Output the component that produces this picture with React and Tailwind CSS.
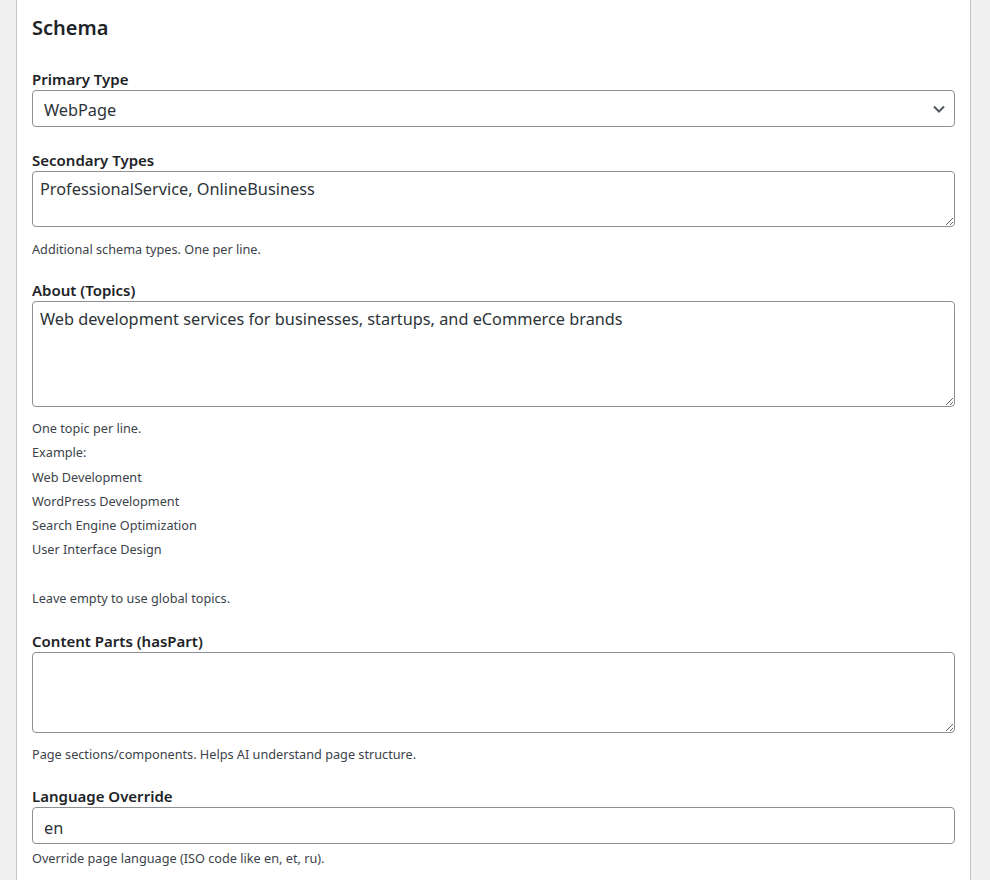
import React from 'react';

const font = { fontFamily: '"Noto Sans", "Segoe UI", sans-serif' };

const Label = ({ children }) => (
  <label className="block text-[15px] font-semibold leading-[22px] text-[#1d2327]">{children}</label>
);

const Help = ({ children, className = 'mt-[12px]' }) => (
  <p className={`${className} text-[12.7px] leading-[20px] text-[#3c434a]`}>{children}</p>
);

const Area = ({ h, value }) => (
  <textarea
    defaultValue={value}
    className={`block w-full ${h} rounded-[4px] border border-[#8c8f94] bg-white px-[7px] py-[5px] text-[16.3px] leading-[24px] text-[#2c3338] outline-none`}
    style={font}
  />
);

export default function App() {
  return (
    <div className="flex min-h-[880px] bg-[#f0f0f1] pl-[16px] pr-[19px]" style={font}>
      <div className="flex-1 border-x border-[#c3c4c7] bg-white px-[15px] pt-[13px] pb-[12px]">
        <h2 className="text-[20px] font-semibold leading-[30px] text-[#1d2327]">Schema</h2>

        <div className="mt-[25px]">
          <Label>Primary Type</Label>
          <div className="relative">
            <select
              defaultValue="WebPage"
              className="block h-[37px] w-full appearance-none rounded-[4px] border border-[#8c8f94] bg-white pt-[3px] pl-[11px] pr-[32px] text-[16.3px] text-[#2c3338] outline-none"
              style={font}
            >
              <option>WebPage</option>
            </select>
            <svg className="pointer-events-none absolute right-[9px] top-[12px]" width="14" height="14" viewBox="0 0 14 14" fill="none">
              <path d="M2 4.5 L7 9.5 L12 4.5" stroke="#50575e" strokeWidth="2" />
            </svg>
          </div>
        </div>

        <div className="mt-[22px]">
          <Label>Secondary Types</Label>
          <Area h="h-[56px]" value="ProfessionalService, OnlineBusiness" />
          <Help>Additional schema types. One per line.</Help>
        </div>

        <div className="mt-[20px]">
          <Label>About (Topics)</Label>
          <Area h="h-[106px]" value="Web development services for businesses, startups, and eCommerce brands" />
          <p className="mt-[9px] text-[12.7px] leading-[24.3px] text-[#3c434a]">
            One topic per line.<br />
            Example:<br />
            Web Development<br />
            WordPress Development<br />
            Search Engine Optimization<br />
            User Interface Design<br />
            <br />
            Leave empty to use global topics.
          </p>
        </div>

        <div className="mt-[20px]">
          <Label>Content Parts (hasPart)</Label>
          <Area h="h-[81px]" value="" />
          <Help className="mt-[11px]">Page sections/components. Helps AI understand page structure.</Help>
        </div>

        <div className="mt-[21px]">
          <Label>Language Override</Label>
          <input
            defaultValue="en"
            className="block h-[37px] w-full rounded-[4px] border border-[#8c8f94] bg-white pt-[4px] px-[11px] text-[16.3px] text-[#2c3338] outline-none"
            style={font}
          />
          <Help className="mt-[4px]">Override page language (ISO code like en, et, ru).</Help>
        </div>
      </div>
    </div>
  );
}
